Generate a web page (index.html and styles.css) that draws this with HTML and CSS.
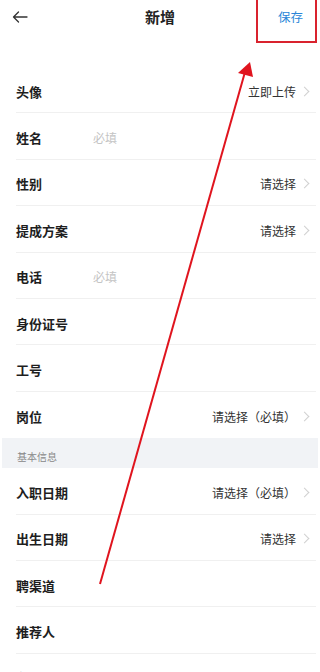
FILE: index.html
```html
<!DOCTYPE html>
<html lang="zh">
<head>
<meta charset="utf-8">
<link rel="stylesheet" href="styles.css">
</head>
<body>
<div class="page">
  <header class="topbar">
    <span class="back">
      <svg width="16" height="12" viewBox="0 0 16 12"><path d="M15 6H1.5M6.5 1L1.5 6l5 5" fill="none" stroke="#333" stroke-width="1.3" stroke-linecap="round" stroke-linejoin="round"/></svg>
    </span>
    <span class="title">新增</span>
    <span class="save">保存</span>
  </header>
  <div class="list">
    <div class="row"><span class="label">头像</span><span class="value">立即上传</span><span class="chev"></span></div>
    <div class="row"><span class="label">姓名</span><span class="ph">必填</span></div>
    <div class="row"><span class="label">性别</span><span class="value">请选择</span><span class="chev"></span></div>
    <div class="row"><span class="label">提成方案</span><span class="value">请选择</span><span class="chev"></span></div>
    <div class="row"><span class="label">电话</span><span class="ph">必填</span></div>
    <div class="row"><span class="label">身份证号</span></div>
    <div class="row"><span class="label">工号</span></div>
    <div class="row last"><span class="label">岗位</span><span class="value">请选择（必填）</span><span class="chev"></span></div>
    <div class="section">基本信息</div>
    <div class="row"><span class="label">入职日期</span><span class="value">请选择（必填）</span><span class="chev"></span></div>
    <div class="row"><span class="label">出生日期</span><span class="value">请选择</span><span class="chev"></span></div>
    <div class="row"><span class="label">聘渠道</span></div>
    <div class="row"><span class="label">推荐人</span></div>
    <div class="row"><span class="label">备注</span></div>
  </div>
  <div class="highlight"></div>
  <svg class="arrow" width="320" height="672" viewBox="0 0 320 672">
    <line x1="100" y1="584" x2="245" y2="72" stroke="#e0141e" stroke-width="2"/>
    <polygon points="250,62 253,77 238,73" fill="#e0141e"/>
  </svg>
</div>
</body>
</html>
```

FILE: styles.css
```css
* { box-sizing: border-box; }
html, body { margin: 0; padding: 0; background: #fff; }
body {
  font-family: "Noto Sans CJK SC", "Noto Sans", sans-serif;
  color: #222;
}
.page {
  position: relative;
  width: 320px;
  height: 672px;
  overflow: hidden;
}
.topbar {
  height: 33px;
  display: flex;
  align-items: center;
  justify-content: space-between;
  padding: 0 12px 0 12px;
  margin-bottom: 34px;
}
.back { width: 40px; display: flex; align-items: center; padding-top: 1px; }
.title { font-size: 15px; font-weight: 700; color: #222; }
.save {
  width: 40px;
  text-align: right;
  font-size: 12.5px;
  color: #2a86d8;
  padding-right: 5px;
}
.list { display: flex; flex-direction: column; }
.row {
  height: 46.4px;
  margin-left: 16px;
  margin-right: 4px;
  border-bottom: 1px solid #f0f0f0;
  display: flex;
  align-items: center;
  padding-top: 3px;
}
.row.last { border-bottom: none; }
.label {
  font-size: 13px;
  font-weight: 700;
  color: #1e1e1e;
  width: 77px;
  flex: none;
}
.ph { font-size: 12px; color: #c4c4c4; }
.value {
  margin-left: auto;
  font-size: 12px;
  color: #333;
}
.chev {
  width: 7px;
  height: 7px;
  border-top: 1.2px solid #d0d0d0;
  border-right: 1.2px solid #d0d0d0;
  transform: rotate(45deg);
  margin-left: 5px;
  margin-right: 8px;
}
.section {
  height: 30px;
  background: #f1f3f6;
  margin: 0 2px;
  font-size: 10px;
  color: #888;
  padding-left: 15px;
  padding-top: 12px;
  line-height: 14px;
}
.highlight {
  position: absolute;
  left: 256px;
  top: -2px;
  width: 61px;
  height: 45px;
  border: 2px solid #d9232e;
}
.arrow {
  position: absolute;
  left: 0;
  top: 0;
}
```
